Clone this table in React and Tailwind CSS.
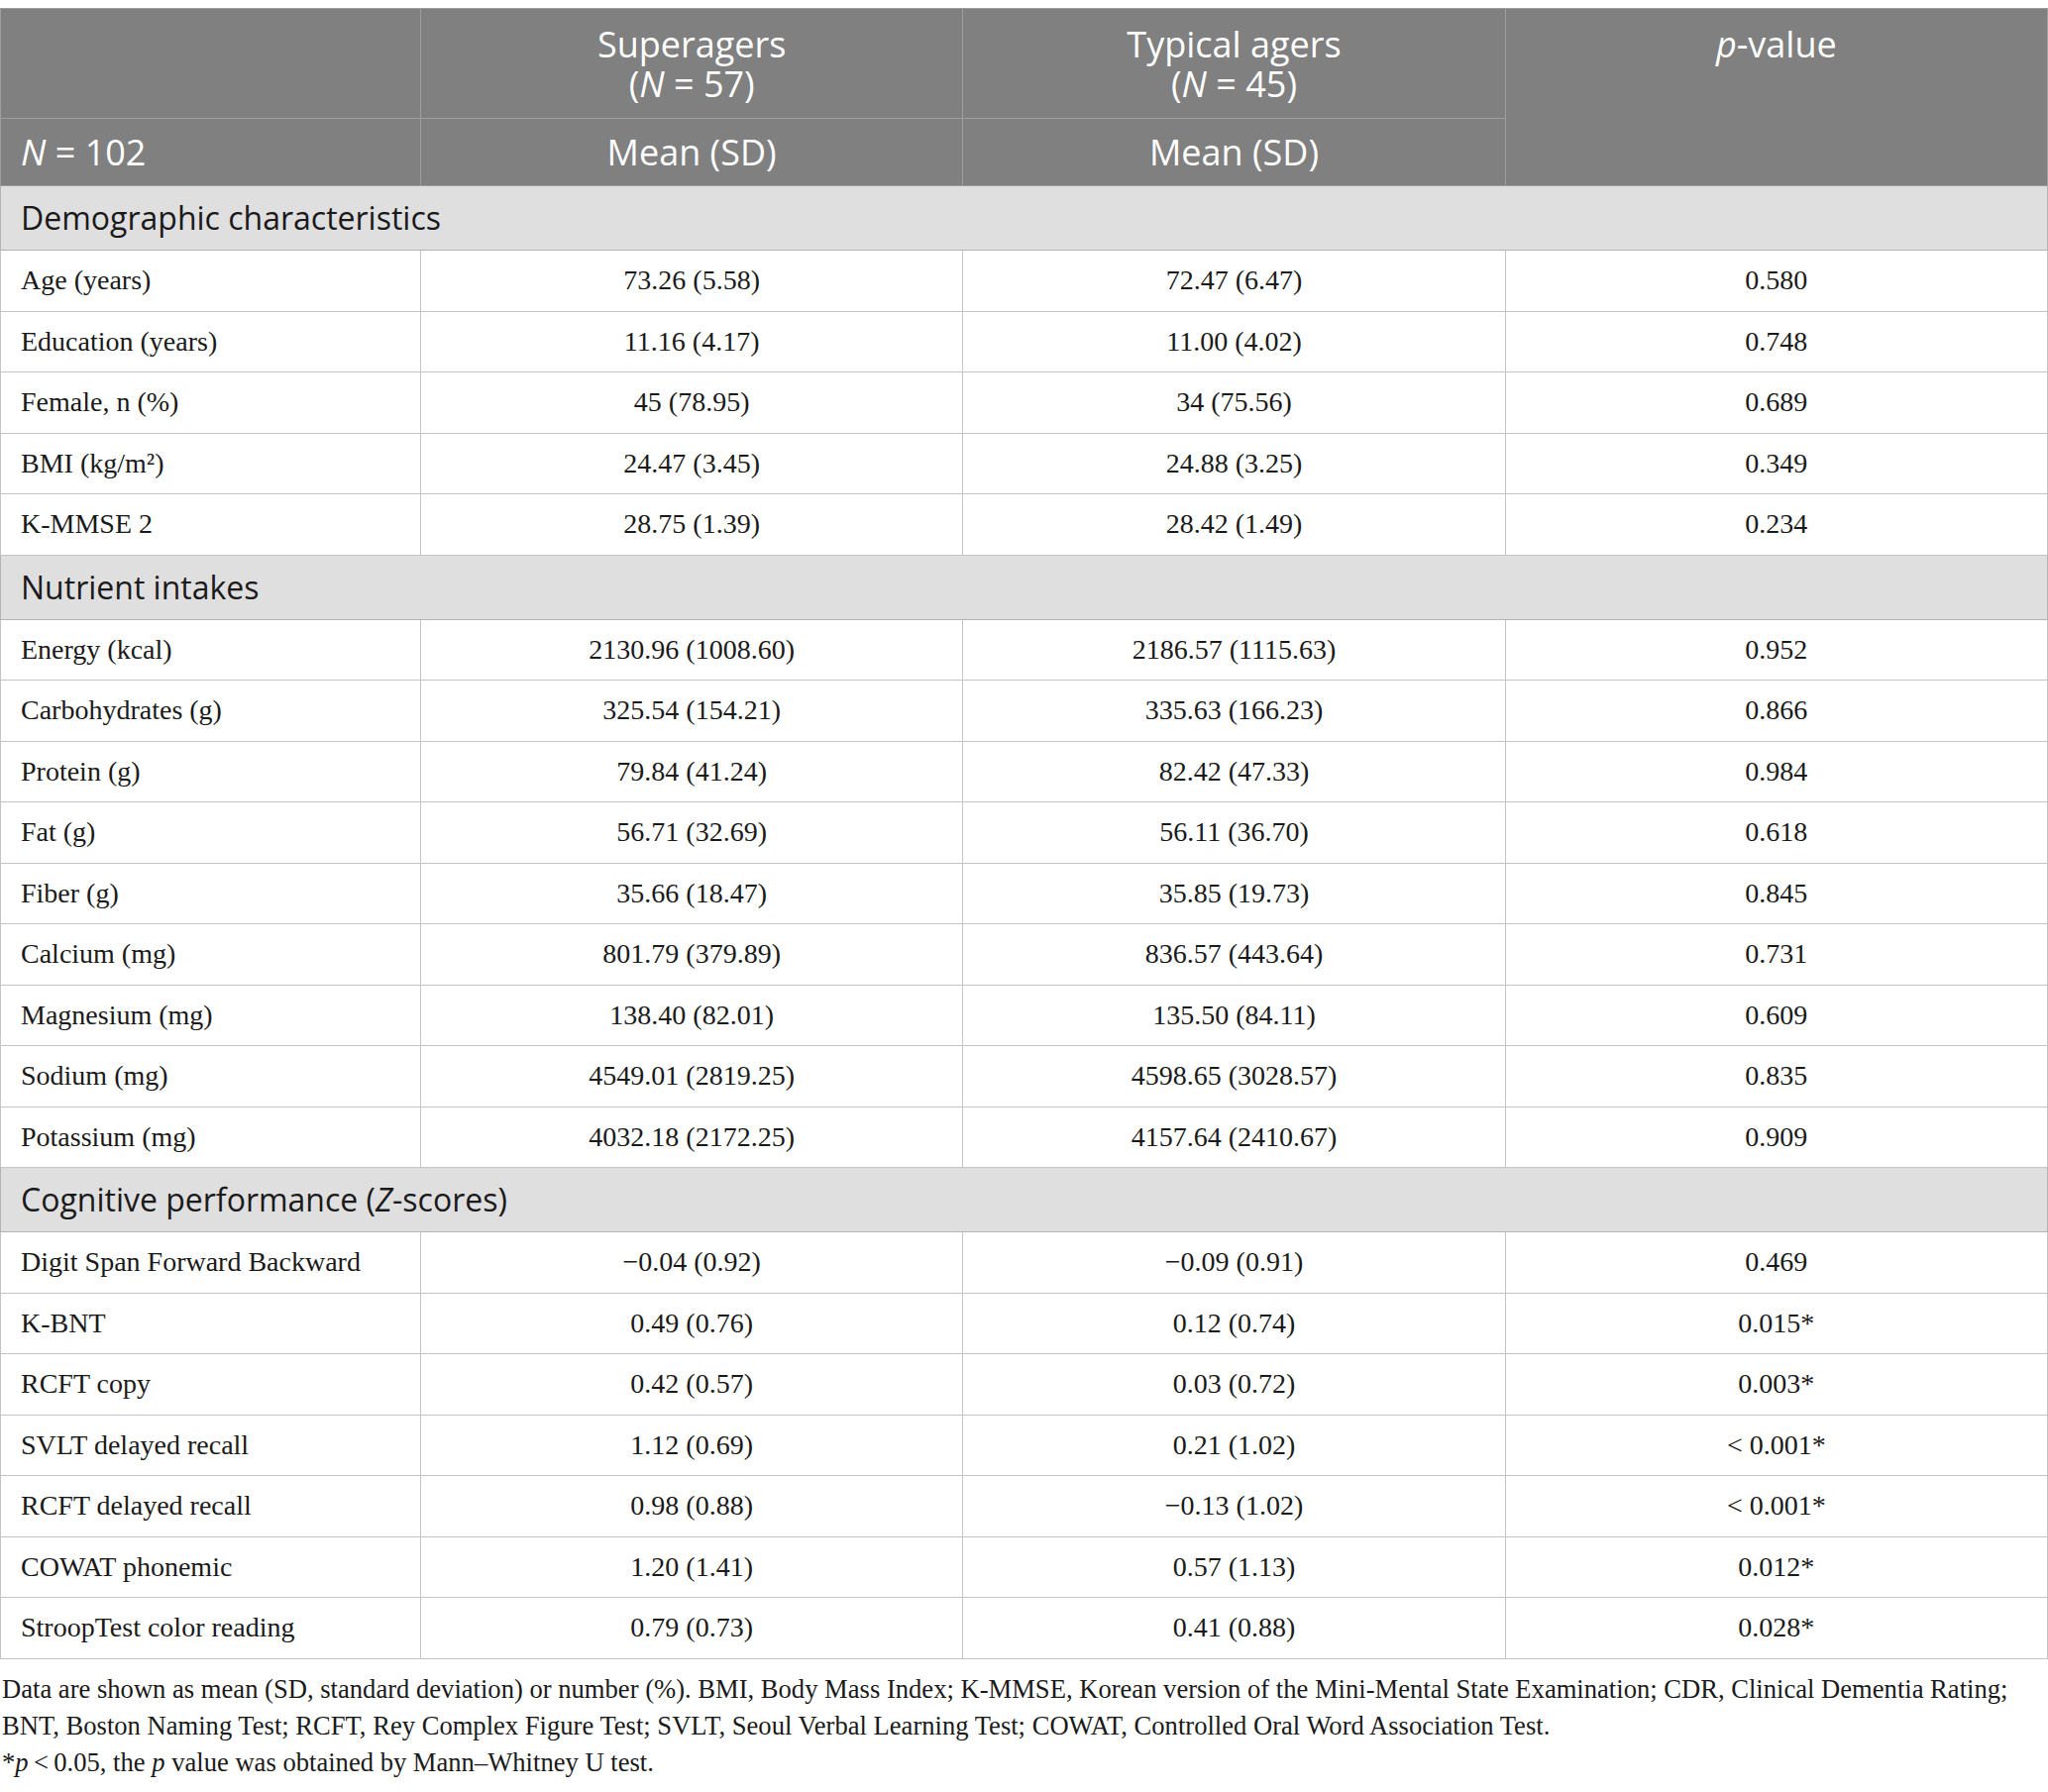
const sans = 'font-["Open_Sans",sans-serif]';
const serif = 'font-["Liberation_Serif",serif]';

const sections = [
  {
    title: 'Demographic characteristics',
    rows: [
      ['Age (years)', '73.26 (5.58)', '72.47 (6.47)', '0.580'],
      ['Education (years)', '11.16 (4.17)', '11.00 (4.02)', '0.748'],
      ['Female, n (%)', '45 (78.95)', '34 (75.56)', '0.689'],
      ['BMI (kg/m²)', '24.47 (3.45)', '24.88 (3.25)', '0.349'],
      ['K-MMSE 2', '28.75 (1.39)', '28.42 (1.49)', '0.234'],
    ],
  },
  {
    title: 'Nutrient intakes',
    rows: [
      ['Energy (kcal)', '2130.96 (1008.60)', '2186.57 (1115.63)', '0.952'],
      ['Carbohydrates (g)', '325.54 (154.21)', '335.63 (166.23)', '0.866'],
      ['Protein (g)', '79.84 (41.24)', '82.42 (47.33)', '0.984'],
      ['Fat (g)', '56.71 (32.69)', '56.11 (36.70)', '0.618'],
      ['Fiber (g)', '35.66 (18.47)', '35.85 (19.73)', '0.845'],
      ['Calcium (mg)', '801.79 (379.89)', '836.57 (443.64)', '0.731'],
      ['Magnesium (mg)', '138.40 (82.01)', '135.50 (84.11)', '0.609'],
      ['Sodium (mg)', '4549.01 (2819.25)', '4598.65 (3028.57)', '0.835'],
      ['Potassium (mg)', '4032.18 (2172.25)', '4157.64 (2410.67)', '0.909'],
    ],
  },
  {
    title: (
      <>
        Cognitive performance (<i>Z</i>-scores)
      </>
    ),
    rows: [
      ['Digit Span Forward Backward', '\u22120.04 (0.92)', '\u22120.09 (0.91)', '0.469'],
      ['K-BNT', '0.49 (0.76)', '0.12 (0.74)', '0.015*'],
      ['RCFT copy', '0.42 (0.57)', '0.03 (0.72)', '0.003*'],
      ['SVLT delayed recall', '1.12 (0.69)', '0.21 (1.02)', '< 0.001*'],
      ['RCFT delayed recall', '0.98 (0.88)', '\u22120.13 (1.02)', '< 0.001*'],
      ['COWAT phonemic', '1.20 (1.41)', '0.57 (1.13)', '0.012*'],
      ['StroopTest color reading', '0.79 (0.73)', '0.41 (0.88)', '0.028*'],
    ],
  },
];

function HeadCell({ children, className = '', ...rest }) {
  return (
    <th
      {...rest}
      className={`border border-[#9d9e9d] bg-[#7f807f] text-[36px] leading-[40px] font-normal text-white ${sans} ${className}`}
    >
      {children}
    </th>
  );
}

export default function App() {
  return (
    <div className="min-h-screen bg-white pt-[8px] text-[#1a1a1a]">
      <table className="w-full table-fixed border-collapse border border-[#b4b4b4]">
        <colgroup>
          <col className="w-[424px]" />
          <col />
          <col />
          <col />
        </colgroup>
        <thead>
          <tr className="h-[111px]">
            <HeadCell />
            <HeadCell className="pt-[16px] align-top">
              <div>Superagers</div>
              <div>
                (<i>N</i> = 57)
              </div>
            </HeadCell>
            <HeadCell className="pt-[16px] align-top">
              <div>Typical agers</div>
              <div>
                (<i>N</i> = 45)
              </div>
            </HeadCell>
            <HeadCell rowSpan={2} className="pt-[16px] align-top">
              <i>p</i>-value
            </HeadCell>
          </tr>
          <tr className="h-[68px]">
            <HeadCell className="pl-[20px] text-left align-middle">
              <i>N</i> = 102
            </HeadCell>
            <HeadCell className="align-middle">Mean (SD)</HeadCell>
            <HeadCell className="align-middle">Mean (SD)</HeadCell>
          </tr>
        </thead>
        <tbody>
          {sections.map((s, si) => (
            <SectionRows key={si} section={s} />
          ))}
        </tbody>
      </table>
      <div className={`mt-[12px] pl-[2px] text-[26.6px] leading-[37px] text-[#1a1a1a] ${serif}`}>
        <div className="whitespace-nowrap">
          Data are shown as mean (SD, standard deviation) or number (%). BMI, Body Mass Index; K-MMSE, Korean
          version of the Mini-Mental State Examination; CDR, Clinical Dementia Rating;
        </div>
        <div className="whitespace-nowrap">
          BNT, Boston Naming Test; RCFT, Rey Complex Figure Test; SVLT, Seoul Verbal Learning Test; COWAT,
          Controlled Oral Word Association Test.
        </div>
        <div className="whitespace-nowrap">
          *<i>p</i>&thinsp;&lt;&thinsp;0.05, the <i>p</i> value was obtained by Mann–Whitney U test.
        </div>
      </div>
    </div>
  );
}

function SectionRows({ section }) {
  return (
    <>
      <tr className="h-[65px]">
        <td
          colSpan={4}
          className={`border border-[#b4b4b4] bg-[#e0dfe0] pl-[20px] text-[32px] text-[#1a1a1a] align-middle ${sans}`}
        >
          {section.title}
        </td>
      </tr>
      {section.rows.map((r, i) => (
        <tr key={i} className="h-[61.5px]">
          <td className={`border border-[#c4c4c4] pl-[20px] text-left text-[28px] align-middle ${serif}`}>{r[0]}</td>
          <td className={`border border-[#c4c4c4] text-center text-[28px] align-middle ${serif}`}>{r[1]}</td>
          <td className={`border border-[#c4c4c4] text-center text-[28px] align-middle ${serif}`}>{r[2]}</td>
          <td className={`border border-[#c4c4c4] text-center text-[28px] align-middle ${serif}`}>{r[3]}</td>
        </tr>
      ))}
    </>
  );
}
